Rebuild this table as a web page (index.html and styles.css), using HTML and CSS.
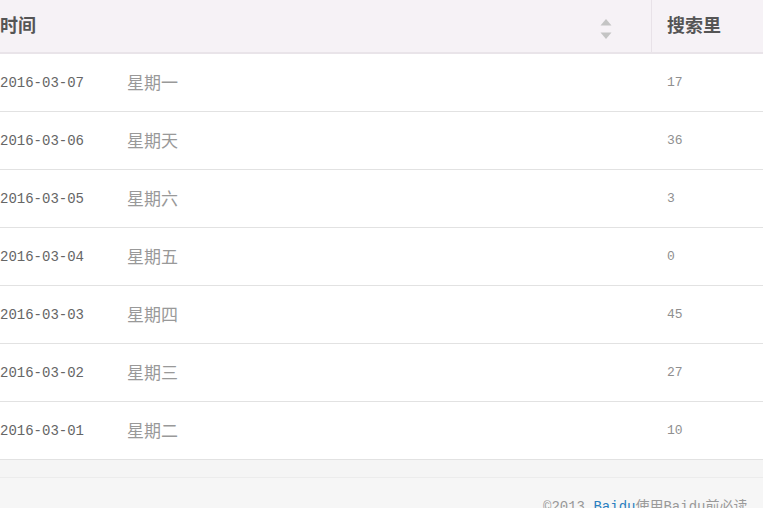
FILE: index.html
```html
<!DOCTYPE html>
<html lang="zh">
<head>
<meta charset="utf-8">
<link rel="stylesheet" href="styles.css">
</head>
<body>
<div class="table">
  <div class="head">
    <div class="hcell hcell-time">
      <span>时间</span>
      <svg class="sort" width="12" height="22" viewBox="0 0 12 22">
        <polygon points="6,1 11.5,7.5 0.5,7.5" fill="#c4c4c4"/>
        <polygon points="0.5,14.5 11.5,14.5 6,21" fill="#c4c4c4"/>
      </svg>
    </div>
    <div class="hcell hcell-count"><span>搜索里</span></div>
  </div>
  <div class="row"><span class="date">2016-03-07</span><span class="day">星期一</span><span class="num">17</span></div>
  <div class="row"><span class="date">2016-03-06</span><span class="day">星期天</span><span class="num">36</span></div>
  <div class="row"><span class="date">2016-03-05</span><span class="day">星期六</span><span class="num">3</span></div>
  <div class="row"><span class="date">2016-03-04</span><span class="day">星期五</span><span class="num">0</span></div>
  <div class="row"><span class="date">2016-03-03</span><span class="day">星期四</span><span class="num">45</span></div>
  <div class="row"><span class="date">2016-03-02</span><span class="day">星期三</span><span class="num">27</span></div>
  <div class="row"><span class="date">2016-03-01</span><span class="day">星期二</span><span class="num">10</span></div>
</div>
<div class="band"></div>
<div class="footer"><p class="copy">©2013 <a class="link">Baidu</a>使用Baidu前必读</p></div>
</body>
</html>
```
FILE: styles.css
```css
html, body {
  margin: 0;
  padding: 0;
  background: #fff;
  overflow: hidden;
  width: 763px;
  height: 513px;
}
body {
  font-family: "Liberation Mono", "Noto Sans CJK SC", monospace;
}
.table {
  width: 763px;
}
.head {
  display: grid;
  grid-template-columns: 651px 1fr;
  height: 52px;
  background: #f6f2f6;
  border-bottom: 2px solid #e9e4e9;
}
.hcell {
  display: flex;
  align-items: center;
  padding-bottom: 5px;
  font-family: "Noto Sans CJK SC", sans-serif;
  font-weight: bold;
  font-size: 18px;
  color: #555;
}
.hcell-time {
  justify-content: space-between;
  padding-right: 39px;
}
.sort {
  display: block;
  margin-top: 10px;
}
.hcell-count {
  border-left: 1px solid #e8e2e8;
  padding-left: 15px;
}
.row {
  display: grid;
  grid-template-columns: 127px 525px 1fr;
  align-items: center;
  padding-bottom: 1px;
  box-sizing: border-box;
  height: 58px;
  border-bottom: 1px solid #e2e2e2;
}
.date {
  padding-top: 2px;
  font-size: 14px;
  color: #666;
}
.day {
  padding-bottom: 2px;
  font-family: "Noto Sans CJK SC", sans-serif;
  font-size: 17px;
  color: #999;
}
.num {
  padding-top: 1px;
  padding-left: 15px;
  font-size: 13px;
  color: #8f8f8f;
}
.band {
  height: 17px;
  background: #f5f5f5;
  border-bottom: 1px solid #ececec;
}
.footer {
  height: 30px;
  background: #f6f6f6;
  overflow: hidden;
  padding-left: 543px;
}
.copy {
  margin: 19px 0 0;
  white-space: nowrap;
  font-size: 14px;
  line-height: 20px;
  color: #999;
}
.link {
  color: #2a7fc0;
}
```
